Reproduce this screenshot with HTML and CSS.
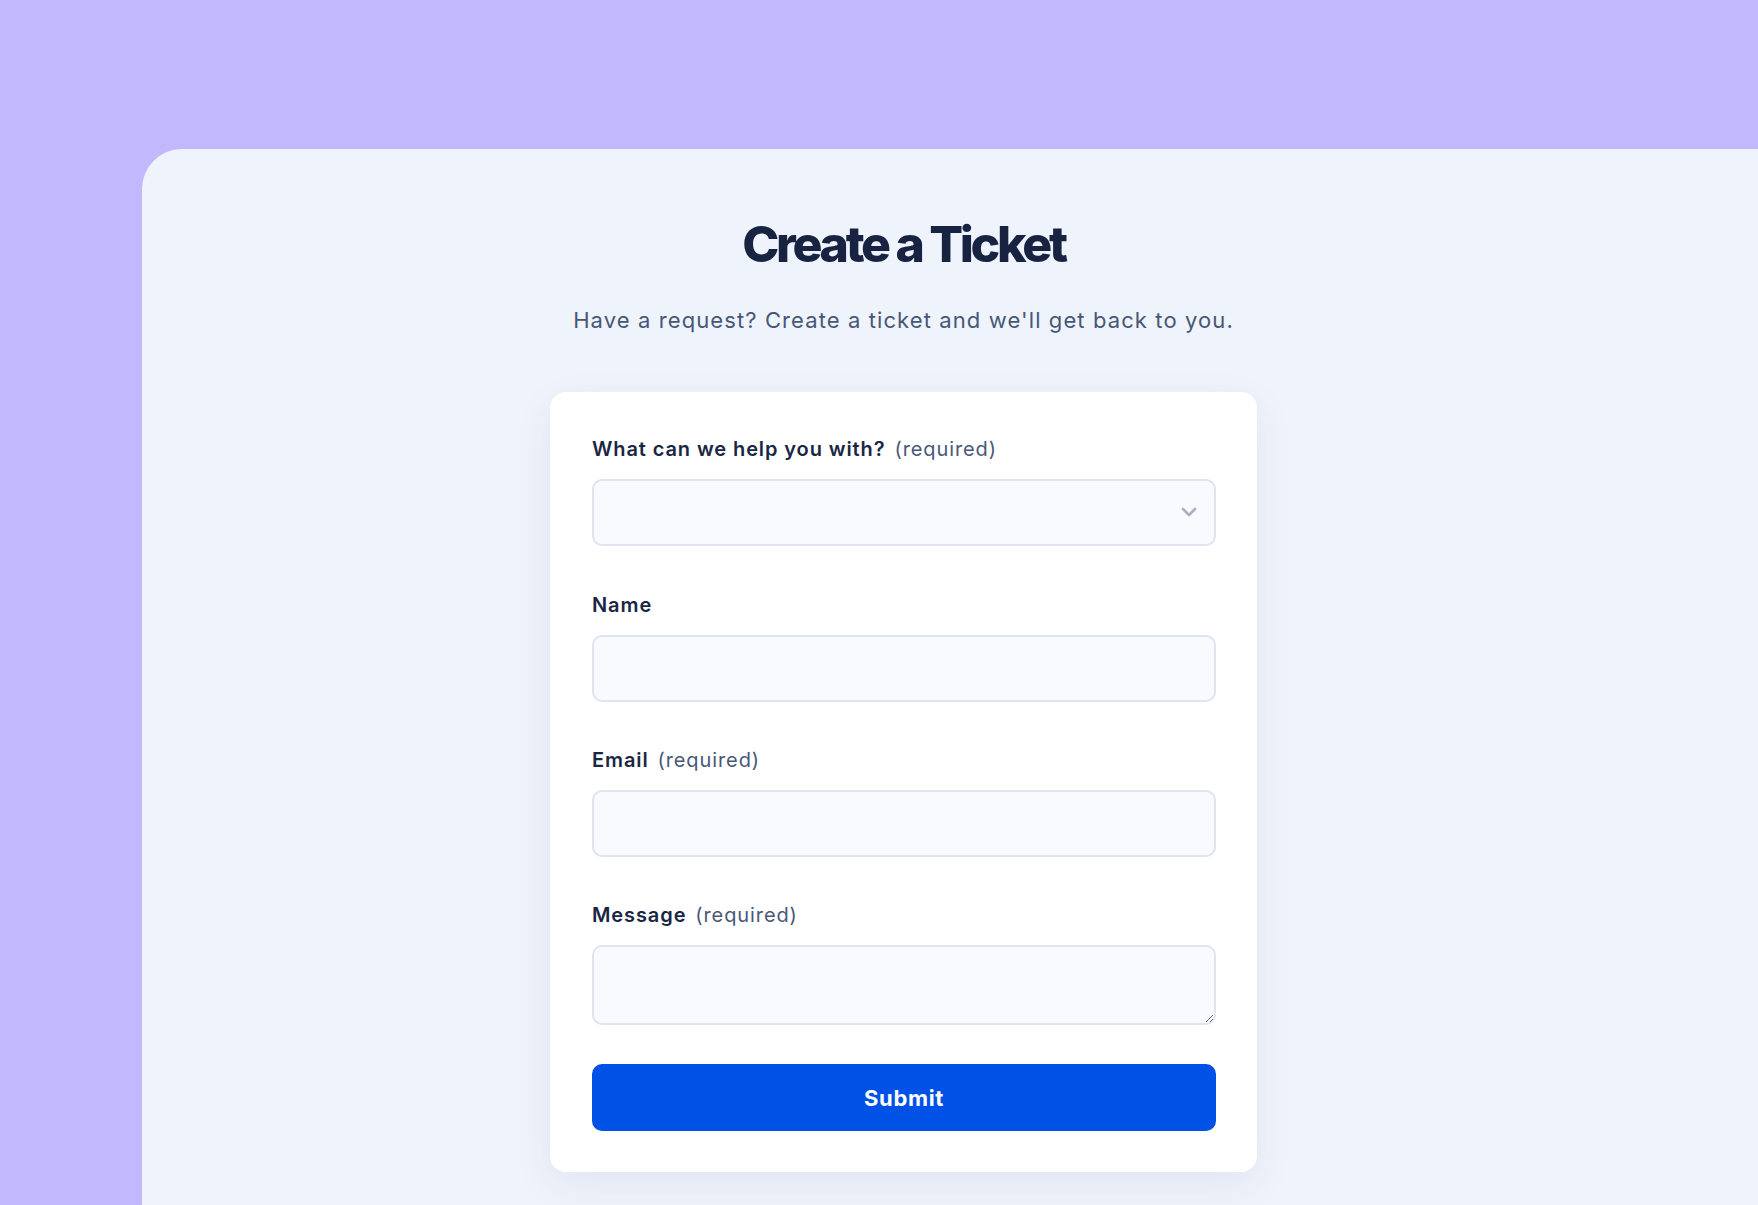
FILE: index.html
```html
<html>
<head>
<meta charset="utf-8" />
<title>Create a Ticket</title>
<link rel="stylesheet" href="styles.css">
</head>
<body>

<div class="panel">
	<div class="content">
		<h1 class="title">Create a Ticket</h1>
		<p class="subtitle">Have a request? Create a ticket and we'll get back to you.</p>

		<form class="card">
			<div class="field">
				<label class="label">What can we help you with? <span class="req">(required)</span></label>
				<div class="select-wrap">
					<select class="input select">
						<option value=""></option>
					</select>
					<svg class="chevron" width="16" height="10" viewBox="0 0 16 10">
						<path d="M2 2l6 6 6-6" fill="none" stroke="#aab1c3" stroke-width="2.6" stroke-linecap="round" stroke-linejoin="round"/>
					</svg>
				</div>
			</div>

			<div class="field">
				<label class="label">Name</label>
				<input class="input" type="text" />
			</div>

			<div class="field">
				<label class="label">Email <span class="req">(required)</span></label>
				<input class="input" type="email" />
			</div>

			<div class="field last">
				<label class="label">Message <span class="req">(required)</span></label>
				<textarea class="input textarea"></textarea>
			</div>

			<button type="button" class="submit">Submit</button>
		</form>
	</div>
</div>

</body>
</html>
```

FILE: styles.css
```css
body{
	margin: 0;
	background: #c1b8fe;
	font-family: Inter, "Noto Sans", "Liberation Sans", sans-serif;
}

.panel{
	margin-top: 149px;
	margin-left: 142px;
	min-height: 1056px;
	background: #eff3fb;
	border-top-left-radius: 40px;
	padding-top: 65px;
	padding-right: 93px;
	box-sizing: border-box;
}

.content{
	display: flex;
	flex-direction: column;
	align-items: center;
}

.title{
	margin: 0;
	font-size: 50px;
	line-height: 60px;
	font-weight: 800;
	letter-spacing: -0.066em;
	color: #172340;
}

.subtitle{
	margin: 30px 0 0 0;
	font-size: 22px;
	line-height: 32px;
	color: #475776;
	letter-spacing: 0.05em;
}

.card{
	margin: 56px 0 0 0;
	width: 707px;
	box-sizing: border-box;
	padding: 43px 41px 41px 42px;
	background: #fff;
	border-radius: 16px;
	box-shadow: 0 12px 40px rgba(40, 56, 120, 0.07);
	display: flex;
	flex-direction: column;
}

.field{
	display: flex;
	flex-direction: column;
	margin-bottom: 44px;
}

.field:first-child{
	margin-bottom: 45px;
}

.field.last{
	margin-bottom: 39px;
}

.label{
	font-size: 20px;
	line-height: 28px;
	font-weight: 600;
	letter-spacing: 0.045em;
	color: #1a2744;
	margin-bottom: 16px;
}

.req{
	font-weight: 400;
	color: #4a5878;
	margin-left: 3px;
}

.input{
	display: block;
	width: 100%;
	height: 67px;
	box-sizing: border-box;
	border: 2px solid #dfe4f0;
	border-radius: 10px;
	background: #f8fafd;
	font-family: inherit;
	font-size: 20px;
	padding: 0 18px;
	outline: none;
}

.select-wrap{
	position: relative;
}

.select{
	-webkit-appearance: none;
	appearance: none;
}

.chevron{
	position: absolute;
	right: 19px;
	top: 28px;
}

.textarea{
	height: 80px;
	padding: 14px 18px;
	resize: vertical;
}

.submit{
	height: 67px;
	border: none;
	border-radius: 10px;
	background: #0051e6;
	color: #fff;
	font-family: inherit;
	font-size: 22px;
	font-weight: 700;
	letter-spacing: 0.03em;
	cursor: pointer;
}
```
